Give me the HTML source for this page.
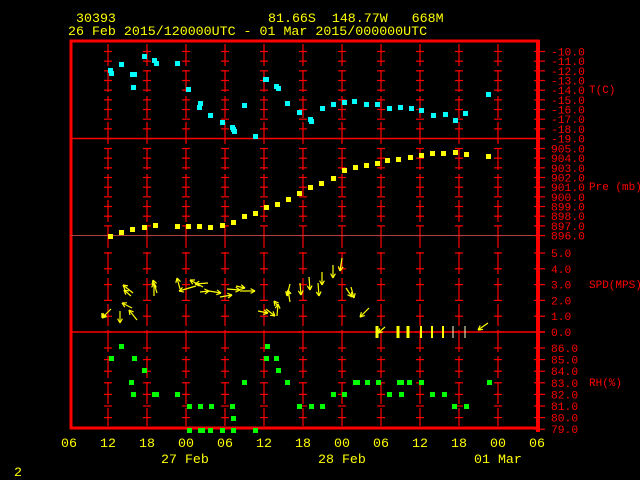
<!DOCTYPE html>
<html><head><meta charset="utf-8"><style>
html,body{margin:0;padding:0;background:#000;width:640px;height:480px;overflow:hidden}
svg{display:block}
text{font-family:"Liberation Mono","DejaVu Sans Mono",monospace;white-space:pre}
</style></head><body>
<svg id="s" width="640" height="480" viewBox="0 0 640 480" xmlns="http://www.w3.org/2000/svg" xml:space="preserve">
<rect width="640" height="480" fill="#000"/>
<g fill="#ffff00" font-size="13.3">
<text x="76" y="22">30393</text>
<text x="268" y="22">81.66S  148.77W   668M</text>
<text x="68" y="35">26 Feb 2015/120000UTC - 01 Mar 2015/000000UTC</text>
</g>
<g id="grid"></g>
<g id="data"></g>
<g fill="#ffff00" font-size="13.3" id="xl"></g>
<g fill="#ffff00" font-size="13.3">
<text x="161" y="463">27 Feb</text>
<text x="318" y="463">28 Feb</text>
<text x="474" y="463">01 Mar</text>
<text x="14" y="476">2</text>
</g>
</svg>
<script>
var NS="http://www.w3.org/2000/svg";
function el(p,t,a,txt){var e=document.createElementNS(NS,t);for(var k in a)e.setAttribute(k,a[k]);if(txt!=null)e.textContent=txt;document.getElementById(p).appendChild(e);return e;}
var R="#ff0000",G="grid";
var xs=[];for(var i=0;i<=12;i++)xs.push(69+39*i);
var temp=[],pre=[],spd=[],rh=[];
for(var i=0;i<10;i++)temp.push([51.5+i*9.67,"-"+(10+i)+".0"]);
for(var i=0;i<10;i++)pre.push([148.5+i*9.67,(905-i)+".0"]);
for(var i=0;i<6;i++)spd.push([253+i*15.8,(5-i)+".0"]);
for(var i=0;i<8;i++)rh.push([348+i*11.6,(86-i)+".0"]);
var rows=[].concat(temp,pre,spd,rh);
for(var i=1;i<12;i++){var x=xs[i];
 el(G,"line",{x1:x,y1:44,x2:x,y2:426,stroke:R,"stroke-width":1.2,"stroke-dasharray":"22 4"});
 rows.forEach(function(r){if(r[0]>42&&r[0]<427)el(G,"line",{x1:x-4,y1:r[0],x2:x+4,y2:r[0],stroke:R,"stroke-width":1.2});});
}
el(G,"rect",{x:71,y:41,width:467,height:387,fill:"none",stroke:R,"stroke-width":3});
el(G,"line",{x1:538,y1:40,x2:538,y2:432,stroke:R,"stroke-width":4});
el(G,"line",{x1:70,y1:138.5,x2:545,y2:138.5,stroke:R,"stroke-width":1.5});
el(G,"line",{x1:70,y1:235.5,x2:545,y2:235.5,stroke:"#b04040","stroke-width":1});
el(G,"line",{x1:70,y1:332,x2:545,y2:332,stroke:R,"stroke-width":1.5});
rows.forEach(function(r){
 el(G,"line",{x1:534,y1:r[0],x2:545,y2:r[0],stroke:R,"stroke-width":1.2});
 el(G,"text",{x:551,y:r[0]+4,fill:R,"font-size":"11.3"},r[1]);
});
el(G,"text",{x:589,y:93,fill:R,"font-size":"11"},"T(C)");
el(G,"text",{x:589,y:190,fill:R,"font-size":"11"},"Pre (mb)");
el(G,"text",{x:589,y:288,fill:R,"font-size":"11"},"SPD(MPS)");
el(G,"text",{x:589,y:386,fill:R,"font-size":"11"},"RH(%)");
var xl=["06","12","18","00","06","12","18","00","06","12","18","00","06"];
xl.forEach(function(t,i){el("xl","text",{x:xs[i]-8,y:447},t);});
var D="data";
var cy=[[111,73],[110,70],[121,64],[132,74],[134,74],[133,87],[144,56],[154,60],[156,63],[177,63],[188,89],[199,107],[200,103],[210,115],[222,122],[233,129],[232,127],[234,131],[244,105],[255,136],[265,79],[266,79],[276,86],[278,88],[287,103],[299,112],[310,119],[311,121],[322,108],[333,104],[344,102],[354,101],[366,104],[377,104],[389,108],[400,107],[411,108],[421,110],[433,115],[445,114],[455,120],[465,113],[488,94]];
cy.forEach(function(p){el(D,"rect",{x:p[0]-2,y:p[1]-2,width:5,height:5,fill:"#00ffff"});});
var yw=[[110,236],[121,232],[132,229],[144,227],[155,225],[177,226],[188,226],[199,226],[210,227],[222,225],[233,222],[244,216],[255,213],[266,207],[277,204],[288,199],[299,193],[310,187],[321,183],[333,178],[344,170],[355,167],[366,165],[377,163],[387,160],[398,159],[410,157],[421,155],[432,153],[443,153],[455,152],[466,154],[488,156]];
yw.forEach(function(p){el(D,"rect",{x:p[0]-2,y:p[1]-2,width:5,height:5,fill:"#ffff00"});});
var gr=[[121,346],[111,358],[134,358],[144,370],[131,382],[133,394],[154,394],[156,394],[177,394],[189,406],[200,406],[211,406],[232,406],[233,418],[244,382],[267,346],[266,358],[276,358],[278,370],[287,382],[299,406],[311,406],[322,406],[333,394],[344,394],[355,382],[357,382],[367,382],[378,382],[389,394],[399,382],[401,382],[401,394],[409,382],[421,382],[432,394],[444,394],[454,406],[466,406],[489,382],[189,430],[200,430],[202,430],[210,430],[222,430],[233,430],[255,430]];
gr.forEach(function(p){el(D,"rect",{x:p[0]-2,y:p[1]-2,width:5,height:5,fill:"#00ff00"});});
var Y="#ffff00";
function arrow(x1,y1,x2,y2){
 el(D,"line",{x1:x1,y1:y1,x2:x2,y2:y2,stroke:Y,"stroke-width":1.2});
 var a=Math.atan2(y2-y1,x2-x1),L=5;
 [0.5,-0.5].forEach(function(d){el(D,"line",{x1:x2,y1:y2,x2:x2-L*Math.cos(a+d),y2:y2-L*Math.sin(a+d),stroke:Y,"stroke-width":1.2});});
}
var W=[[111,309,102,318],[104,314,102,318],[120,311,120,323],[137,320,129,310],[132,308,122,303],[133,293,123,285],[131,296,124,290],[154,296,154,283],[157,293,153,280],[180,289,177,278],[196,286,179,291],[203,287,190,280],[208,283,195,284],[200,292,209,291],[209,291,221,293],[220,297,232,295],[227,289,240,290],[240,291,255,291],[236,286,245,288],[258,311,268,313],[266,309,275,316],[278,306,274,301],[277,316,278,304],[290,302,288,290],[290,284,287,296],[300,283,301,295],[309,277,310,290],[318,283,319,296],[322,272,322,285],[333,265,333,278],[342,258,340,271],[346,288,352,297],[351,287,354,298],[369,308,360,317],[385,327,378,333],[488,323,478,330]];
W.forEach(function(w){arrow(w[0],w[1],w[2],w[3]);});
[[377,3],[398,3],[408,3],[421,2],[432,2],[443,2],[453,1],[465,1]].forEach(function(b){
 el(D,"rect",{x:b[0]-b[1]/2,y:326,width:b[1],height:12,fill:b[0]>445?"#ffffcc":"#ffff00"});});
</script>
</body></html>
